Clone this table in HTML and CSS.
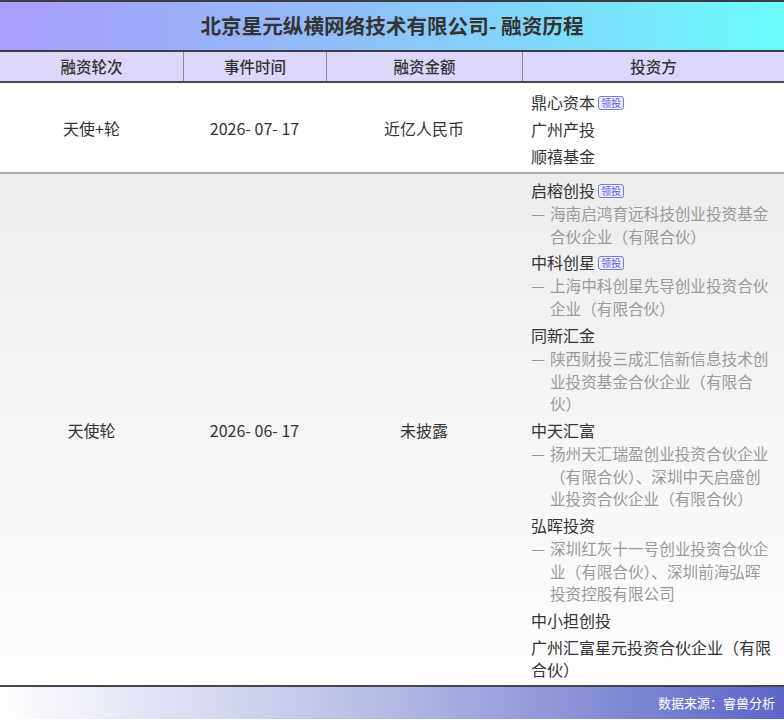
FILE: index.html
```html
<!DOCTYPE html>
<html lang="zh">
<head>
<meta charset="utf-8">
<link rel="stylesheet" href="styles.css">
</head>
<body>
<div class="page">
  <div class="title">北京星元纵横网络技术有限公司- 融资历程</div>
  <div class="head">
    <div class="hcell">融资轮次</div>
    <div class="hcell">事件时间</div>
    <div class="hcell">融资金额</div>
    <div class="hcell">投资方</div>
  </div>
  <div class="row row-a">
    <div class="cell">天使+轮</div>
    <div class="cell">2026- 07- 17</div>
    <div class="cell">近亿人民币</div>
    <div class="cell inv">
      <div class="item"><div class="name">鼎心资本<span class="badge">领投</span></div></div>
      <div class="item"><div class="name">广州产投</div></div>
      <div class="item"><div class="name">顺禧基金</div></div>
    </div>
  </div>
  <div class="row row-b">
    <div class="cell">天使轮</div>
    <div class="cell">2026- 06- 17</div>
    <div class="cell">未披露</div>
    <div class="cell inv">
      <div class="item"><div class="name">启榕创投<span class="badge">领投</span></div>
        <div class="sub"><span class="dash">—</span><span>海南启鸿育远科技创业投资基金合伙企业（有限合伙）</span></div></div>
      <div class="item"><div class="name">中科创星<span class="badge">领投</span></div>
        <div class="sub"><span class="dash">—</span><span>上海中科创星先导创业投资合伙企业（有限合伙）</span></div></div>
      <div class="item"><div class="name">同新汇金</div>
        <div class="sub"><span class="dash">—</span><span>陕西财投三成汇信新信息技术创业投资基金合伙企业（有限合伙）</span></div></div>
      <div class="item"><div class="name">中天汇富</div>
        <div class="sub"><span class="dash">—</span><span>扬州天汇瑞盈创业投资合伙企业（有限合伙）、深圳中天启盛创业投资合伙企业（有限合伙）</span></div></div>
      <div class="item"><div class="name">弘晖投资</div>
        <div class="sub"><span class="dash">—</span><span>深圳红灰十一号创业投资合伙企业（有限合伙）、深圳前海弘晖投资控股有限公司</span></div></div>
      <div class="item"><div class="name">中小担创投</div></div>
      <div class="item"><div class="name">广州汇富星元投资合伙企业（有限合伙）</div></div>
    </div>
  </div>
  <div class="foot">数据来源：睿兽分析</div>
</div>
</body>
</html>
```
FILE: styles.css
```css
* { box-sizing: border-box; }
html, body { margin: 0; padding: 0; }
body {
  font-family: "Noto Sans CJK SC", "Noto Sans", sans-serif;
  color: #333;
  background: #fff;
  width: 784px;
  height: 720px;
  overflow: hidden;
}
.page { width: 784px; }
.title {
  height: 52px;
  border-top: 2px solid #3c3c44;
  border-bottom: 2px solid #3c3c44;
  background: linear-gradient(90deg, #aa9cfa 0%, #8cc4fa 50%, #6bfcfb 100%);
  text-align: center;
  font-size: 20.6px;
  font-weight: 700;
  line-height: 46px;
  color: #333;
}
.head {
  display: grid;
  grid-template-columns: 183px 143px 196px 1fr;
  height: 31px;
  background: #ddd7fb;
  border-bottom: 2px solid #48484f;
}
.hcell {
  text-align: center;
  font-size: 15.5px;
  font-weight: 500;
  line-height: 29px;
  border-left: 1px solid #8a8a96;
}
.hcell:first-child { border-left: none; }
.row {
  display: grid;
  grid-template-columns: 183px 143px 196px 1fr;
}
.row-a { background: #fff; border-bottom: 2px solid #aaa; }
.row-b {
  background: linear-gradient(180deg, #ededed 0%, #fefefe 100%);
  border-bottom: 2px solid #45454c;
}
.cell {
  display: flex;
  align-items: center;
  justify-content: center;
  font-size: 16px;
  color: #333;
}
.cell.inv {
  display: flex;
  flex-direction: column;
  align-items: stretch;
  justify-content: flex-start;
  gap: 3px;
  padding: 4px 13px 4px 9px;
}
.row-a .cell.inv { padding: 7px 13px 4px 9px; }
.name {
  font-size: 16px;
  line-height: 22px;
  padding: 1px 0;
  color: #333;
}
.badge {
  display: inline-block;
  vertical-align: 2px;
  margin-left: 3px;
  font-size: 10px;
  line-height: 12px;
  padding: 0 2px;
  color: #5858e6;
  background: #eeeeff;
  border: 1px solid #7878ee;
  border-radius: 3px;
}
.sub {
  display: flex;
  font-size: 15.6px;
  line-height: 22.7px;
  color: #9a9a9a;
}
.dash { flex: 0 0 19px; }
.foot {
  height: 32px;
  background: linear-gradient(90deg, #ffffff 0%, #b4b9e4 50%, #5c66c8 100%);
  text-align: right;
  padding-right: 9px;
  font-size: 13px;
  line-height: 32px;
  color: #fff;
}
```
